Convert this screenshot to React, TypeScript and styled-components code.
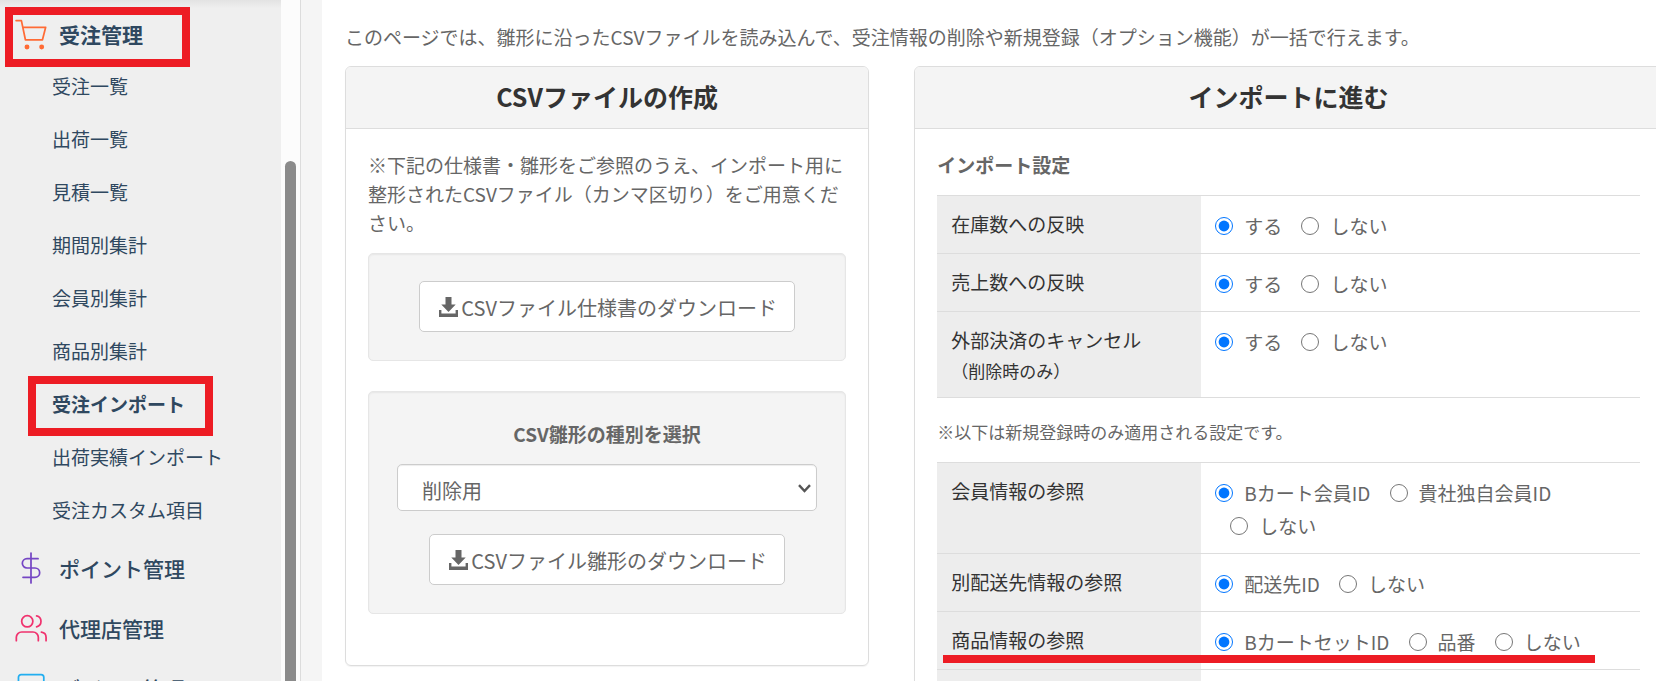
import React from "react";
import styled, { createGlobalStyle, css } from "styled-components";

const GlobalStyle = createGlobalStyle`
  *, *::before, *::after { box-sizing: border-box; }
  body {
    margin: 0;
    color: #666;
    background: #fff;
    font-family: "Noto Sans CJK JP", "Noto Sans", sans-serif;
    font-size: 19px;
    line-height: 29px;
  }
`;

const Shell = styled.div`
  display: flex;
  height: 100vh;
  overflow: hidden;
`;

const Sidebar = styled.aside`
  display: flex;
  flex: none;
  width: 301px;
  background: #efefef;
  border-right: 1px solid #dcdcdc;
`;

const Nav = styled.nav`
  flex: 1;
  padding-top: 8px;
  background: linear-gradient(#e3e3e3, #efefef) 0 0 / 100% 8px no-repeat;
`;

const ScrollTrack = styled.div`
  width: 19px;
  padding: 161px 4px 0;
  background: #fcfcfc;
`;

const ScrollThumb = styled.div`
  height: 100%;
  background: #8b8b8b;
  border-radius: 6px 6px 0 0;
`;

const GroupLink = styled.a<{ $open?: boolean }>`
  position: relative;
  display: flex;
  align-items: center;
  gap: 12px;
  height: ${(p) => (p.$open ? 51 : 60)}px;
  padding: ${(p) => (p.$open ? 2 : 0)}px 0 0 15px;
  color: #2f4860;
  font-size: 21px;
  font-weight: ${(p) => (p.$open ? 700 : 500)};
  text-decoration: none;
`;

const SubList = styled.ul`
  margin: 0 0 2px;
  padding: 0;
  list-style: none;
`;

const SubLink = styled.a<{ $current?: boolean }>`
  position: relative;
  display: flex;
  align-items: center;
  height: 53px;
  padding: 0 0 1px 52px;
  color: #2f4860;
  font-weight: ${(p) => (p.$current ? 700 : 400)};
  text-decoration: none;
`;

const HighlightBox = styled.span<{ $left: number }>`
  position: absolute;
  top: -1px;
  left: ${(p) => p.$left}px;
  width: 185px;
  height: 60px;
  border: 8px solid #ed1c24;
`;

const MenuIcon = styled.svg`
  width: 32px;
  height: 32px;
  flex: none;
  fill: none;
  stroke-width: 1.3;
  stroke-linecap: round;
  stroke-linejoin: round;
`;

const Gutter = styled.div`
  flex: none;
  width: 21px;
  background: #f5f5f5;
`;

const Main = styled.main`
  flex: 1;
  min-width: 0;
  margin-right: 5px;
  padding: 22px 0 0 23px;
  overflow: hidden;
`;

const Intro = styled.p`
  margin: 0 0 15px;
`;

const Cards = styled.div`
  display: grid;
  grid-template-columns: minmax(0, 7fr) minmax(0, 10fr);
  align-items: start;
  gap: 45px;
  margin-right: -7px;
`;

const Card = styled.section`
  border: 1px solid #ddd;
  border-radius: 6px;
  box-shadow: 0 1px 1px rgba(0, 0, 0, 0.05);
`;

const CardTitle = styled.h2`
  margin: 0;
  padding: 11px 20px 13px;
  color: #333;
  background: #f4f4f4;
  border-bottom: 1px solid #ddd;
  border-radius: 5px 5px 0 0;
  font-size: 25px;
  font-weight: 700;
  line-height: 37px;
  text-align: center;
`;

const CardBody = styled.div`
  padding: 21px 22px;
`;

const Lead = styled.p`
  margin: 0 0 16px;
`;

const Well = styled.div`
  display: flex;
  flex-direction: column;
  align-items: center;
  margin-bottom: 30px;
  padding: 27px 28px 28px;
  background: #f4f4f4;
  border: 1px solid #e6e6e6;
  border-radius: 5px;
  box-shadow: inset 0 1px 2px rgba(0, 0, 0, 0.06);
`;

const fieldBase = css`
  color: #666;
  background: #fff;
  border: 1px solid #ccc;
  border-radius: 5px;
  font-family: inherit;
  font-size: 20px;
`;

const DownloadButton = styled.button`
  ${fieldBase}
  display: flex;
  align-items: center;
  gap: 3px;
  height: 51px;
  padding: 2px 17px 0 19px;
  white-space: nowrap;
`;

const DownloadGlyph = styled.svg`
  width: 19px;
  height: 20px;
  margin-bottom: 2px;
  fill: #666;
`;

const FieldLabel = styled.label`
  margin-bottom: 15px;
  font-weight: 700;
  line-height: 30px;
`;

const SelectBox = styled.div`
  position: relative;
  width: 100%;
  margin-bottom: 23px;
`;

const TypeSelect = styled.select`
  ${fieldBase}
  display: block;
  width: 100%;
  height: 47px;
  padding: 5px 30px 0 24px;
  appearance: none;
  box-shadow: inset 0 1px 1px rgba(0, 0, 0, 0.075);
`;

const Chevron = styled.svg`
  position: absolute;
  top: 20px;
  right: 6px;
  width: 13px;
  height: 9px;
  fill: none;
  stroke: #555;
  stroke-width: 2.4;
  pointer-events: none;
`;

const SectionTitle = styled.h3`
  margin: 0 0 16px;
  font-size: 19px;
  font-weight: 700;
`;

const Note = styled.p`
  margin: 21px 0 17px;
  font-size: 17px;
  line-height: 26px;
`;

const SettingsTable = styled.table`
  width: 100%;
  border-spacing: 0;
  border-bottom: 1px solid #ddd;
  table-layout: fixed;
`;

const SettingRow = styled.tr`
  position: relative;
`;

const SettingName = styled.th`
  width: 264px;
  height: 58px;
  padding: 13px 14px 12px;
  color: #333;
  background: #ededed;
  border-top: 1px solid #ddd;
  font-weight: 400;
  text-align: left;
  vertical-align: top;
`;

const SettingHint = styled.small`
  display: block;
  margin-top: 2px;
  font-size: 17px;
`;

const SettingOptions = styled.td`
  padding: 13px 14px 11px;
  border-top: 1px solid #ddd;
  line-height: 33px;
  vertical-align: top;
`;

const OptionLabel = styled.label`
  display: inline-flex;
  align-items: center;
  gap: 11px;
  vertical-align: top;
  white-space: nowrap;

  & + & {
    margin-left: 15px;
  }
`;

const RadioInput = styled.input`
  flex: none;
  width: 18px;
  height: 18px;
  margin: 0;
`;

const Underline = styled.span`
  position: absolute;
  bottom: 6px;
  left: 6px;
  width: 652px;
  height: 8px;
  background: #ed1c24;
`;

const DownloadIcon = () => (
  <DownloadGlyph viewBox="0 0 19 20" aria-hidden="true">
    <path d="M6.5 0h6v7.5h4.2L9.5 15 2.3 7.5h4.2z" />
    <path d="M0 13h2.4v3.6h14.2V13H19v7H0z" />
  </DownloadGlyph>
);

const CartIcon = () => (
  <MenuIcon viewBox="0 0 24 24" stroke="#ff6b35" aria-hidden="true">
    <path d="M.8 1.2h4l3 14.4h12.8L23 6.2H6" />
    <circle cx="9" cy="21" r="1.2" fill="#ff6b35" />
    <circle cx="20" cy="21" r="1.2" fill="#ff6b35" />
  </MenuIcon>
);

const DollarIcon = () => (
  <MenuIcon viewBox="0 0 24 24" stroke="#7546c4" aria-hidden="true">
    <path d="M12 .8v22.4M17.3 5H9a3.5 3.5 0 0 0 0 7h6a3.5 3.5 0 0 1 0 7H6" />
  </MenuIcon>
);

const UsersIcon = () => (
  <MenuIcon viewBox="0 0 24 24" stroke="#f0326e" aria-hidden="true">
    <path d="M17.5 21.5v-2.5a4 4 0 0 0-4-4H5a4 4 0 0 0-4 4v2.5" />
    <circle cx="9.2" cy="7" r="4.2" />
    <path d="M23.3 21.5v-2.5a4 4 0 0 0-3.5-3.9M16.2 2.9a4.2 4.2 0 0 1 0 8.2" />
  </MenuIcon>
);

const LayoutIcon = () => (
  <MenuIcon viewBox="0 0 24 24" stroke="#22aef0" aria-hidden="true">
    <rect x="2.6" y="2" width="19" height="19" rx="2" />
    <path d="M2.6 9h19M9 21V9" />
  </MenuIcon>
);

const orderLinks = [
  "受注一覧",
  "出荷一覧",
  "見積一覧",
  "期間別集計",
  "会員別集計",
  "商品別集計",
  "受注インポート",
  "出荷実績インポート",
  "受注カスタム項目",
];
const currentLink = "受注インポート";

interface Setting {
  id: string;
  name: string;
  hint?: string;
  options: string[];
  marked?: boolean;
}

const importSettings: Setting[] = [
  { id: "stock", name: "在庫数への反映", options: ["する", "しない"] },
  { id: "sales", name: "売上数への反映", options: ["する", "しない"] },
  { id: "payment", name: "外部決済のキャンセル", hint: "（削除時のみ）", options: ["する", "しない"] },
];

const newOrderSettings: Setting[] = [
  { id: "member", name: "会員情報の参照", options: ["Bカート会員ID", "貴社独自会員ID", "しない"] },
  { id: "shipping", name: "別配送先情報の参照", options: ["配送先ID", "しない"] },
  { id: "product", name: "商品情報の参照", options: ["BカートセットID", "品番", "しない"], marked: true },
  { id: "more", name: "", options: [] },
];

const Settings = ({ rows }: { rows: Setting[] }) => (
  <SettingsTable>
    <tbody>
      {rows.map((row) => (
        <SettingRow key={row.id}>
          <SettingName scope="row">
            {row.name}
            {row.hint && <SettingHint>{row.hint}</SettingHint>}
            {row.marked && <Underline />}
          </SettingName>
          <SettingOptions>
            {row.options.map((option, i) => (
              <React.Fragment key={option}>
                {i > 0 && " "}
                <OptionLabel>
                  <RadioInput type="radio" name={row.id} defaultChecked={i === 0} />
                  {option}
                </OptionLabel>
              </React.Fragment>
            ))}
          </SettingOptions>
        </SettingRow>
      ))}
    </tbody>
  </SettingsTable>
);

export default function App() {
  return (
    <>
      <GlobalStyle />
      <Shell>
        <Sidebar>
          <Nav>
            <GroupLink href="#orders" $open>
              <CartIcon />
              受注管理
              <HighlightBox $left={5} />
            </GroupLink>
            <SubList>
              {orderLinks.map((name) => (
                <li key={name}>
                  <SubLink href="#orders" $current={name === currentLink}>
                    {name}
                    {name === currentLink && <HighlightBox $left={28} />}
                  </SubLink>
                </li>
              ))}
            </SubList>
            <GroupLink href="#points">
              <DollarIcon />
              ポイント管理
            </GroupLink>
            <GroupLink href="#agents">
              <UsersIcon />
              代理店管理
            </GroupLink>
            <GroupLink href="#design">
              <LayoutIcon />
              デザイン管理
            </GroupLink>
          </Nav>
          <ScrollTrack>
            <ScrollThumb />
          </ScrollTrack>
        </Sidebar>
        <Gutter />
        <Main>
          <Intro>
            このページでは、雛形に沿ったCSVファイルを読み込んで、受注情報の削除や新規登録（オプション機能）が一括で行えます。
          </Intro>
          <Cards>
            <Card>
              <CardTitle>CSVファイルの作成</CardTitle>
              <CardBody>
                <Lead>
                  ※下記の仕様書・雛形をご参照のうえ、インポート用に整形されたCSVファイル（カンマ区切り）をご用意ください。
                </Lead>
                <Well>
                  <DownloadButton type="button">
                    <DownloadIcon />
                    CSVファイル仕様書のダウンロード
                  </DownloadButton>
                </Well>
                <Well>
                  <FieldLabel htmlFor="template-type">CSV雛形の種別を選択</FieldLabel>
                  <SelectBox>
                    <TypeSelect id="template-type" defaultValue="delete">
                      <option value="delete">削除用</option>
                    </TypeSelect>
                    <Chevron viewBox="0 0 13 9" aria-hidden="true">
                      <path d="M1 1.2 6.5 7 12 1.2" />
                    </Chevron>
                  </SelectBox>
                  <DownloadButton type="button">
                    <DownloadIcon />
                    CSVファイル雛形のダウンロード
                  </DownloadButton>
                </Well>
              </CardBody>
            </Card>
            <Card>
              <CardTitle>インポートに進む</CardTitle>
              <CardBody>
                <SectionTitle>インポート設定</SectionTitle>
                <Settings rows={importSettings} />
                <Note>※以下は新規登録時のみ適用される設定です。</Note>
                <Settings rows={newOrderSettings} />
              </CardBody>
            </Card>
          </Cards>
        </Main>
      </Shell>
    </>
  );
}
